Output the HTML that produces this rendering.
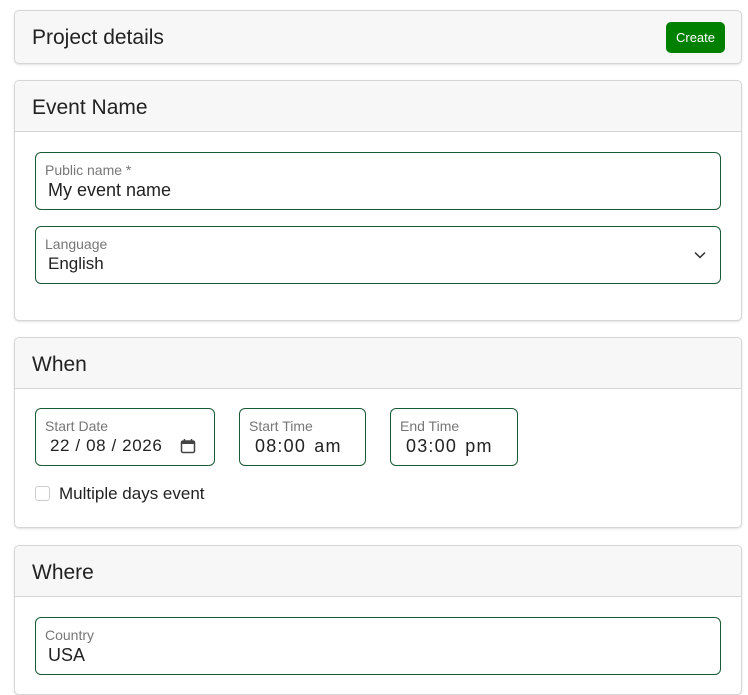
<!DOCTYPE html>
<html><head><meta charset="utf-8"><style>
*{box-sizing:border-box;margin:0;padding:0}
body{width:748px;height:678px;background:#fff;font-family:"Liberation Sans",sans-serif;color:#222;position:relative;overflow:hidden}
.card{position:absolute;left:14px;width:728px;border:1px solid #d6d6d6;border-radius:5px;background:#fff;box-shadow:0 1px 2px rgba(0,0,0,.12)}
.hd{background:#f7f7f7;border-bottom:1px solid #d6d6d6;height:51px;border-radius:5px 5px 0 0;font-size:21px;padding:15px 0 0 17px;color:#222}
.in{position:absolute;border:1px solid #1a5a35;border-radius:6px;background:#fff}
.lb{position:absolute;left:9px;top:9px;font-size:14px;color:#777}
.vl{position:absolute;left:12px;top:27px;font-size:18px;color:#222}
.sp{letter-spacing:1.2px;word-spacing:2px}
</style></head><body>
<div class="card" style="top:10px;height:54px;background:#f7f7f7">
 <div style="font-size:21px;padding:15px 0 0 17px">Project details</div>
 <div style="position:absolute;left:651px;top:11px;width:59px;height:31px;background:#008000;border-radius:5px;color:#fff;font-size:13px;text-align:center;line-height:31px">Create</div>
</div>
<div class="card" style="top:80px;height:241px"><div class="hd">Event Name</div></div>
<div class="in" style="left:35px;top:152px;width:686px;height:58px"><div class="lb">Public name *</div><div class="vl">My event name</div></div>
<div class="in" style="left:35px;top:226px;width:686px;height:58px"><div class="lb">Language</div><div class="vl" style="font-size:17px;top:27px">English</div>
<svg style="position:absolute;left:658px;top:24px" width="12" height="8" viewBox="0 0 12 8"><path d="M1 1.5l5 5 5-5" fill="none" stroke="#333" stroke-width="1.5"/></svg></div>
<div class="card" style="top:337px;height:191px"><div class="hd">When</div></div>
<div class="in" style="left:35px;top:408px;width:180px;height:58px"><div class="lb">Start Date</div><div class="vl" style="left:14px;font-size:17px;letter-spacing:0.6px;word-spacing:0">22 / 08 / 2026</div>
<svg style="position:absolute;left:144px;top:29px" width="16" height="16" viewBox="0 0 16 16"><rect x="1.5" y="3" width="13" height="11.5" rx="1.5" fill="none" stroke="#444" stroke-width="1.5"/><rect x="1.5" y="3" width="13" height="3" fill="#444"/><path d="M4.5 1v3M11.5 1v3" stroke="#444" stroke-width="1.5"/></svg></div>
<div class="in" style="left:239px;top:408px;width:127px;height:58px"><div class="lb">Start Time</div><div class="vl sp" style="left:15px">08:00&nbsp;am</div></div>
<div class="in" style="left:390px;top:408px;width:128px;height:58px"><div class="lb">End Time</div><div class="vl sp" style="left:15px">03:00&nbsp;pm</div></div>
<div style="position:absolute;left:35px;top:486px;width:15px;height:15px;border:1px solid #ccc;border-radius:3px"></div>
<div style="position:absolute;left:59px;top:484px;font-size:17px">Multiple days event</div>
<div class="card" style="top:545px;height:150px"><div class="hd">Where</div></div>
<div class="in" style="left:35px;top:617px;width:686px;height:58px"><div class="lb">Country</div><div class="vl">USA</div></div>
</body></html>
